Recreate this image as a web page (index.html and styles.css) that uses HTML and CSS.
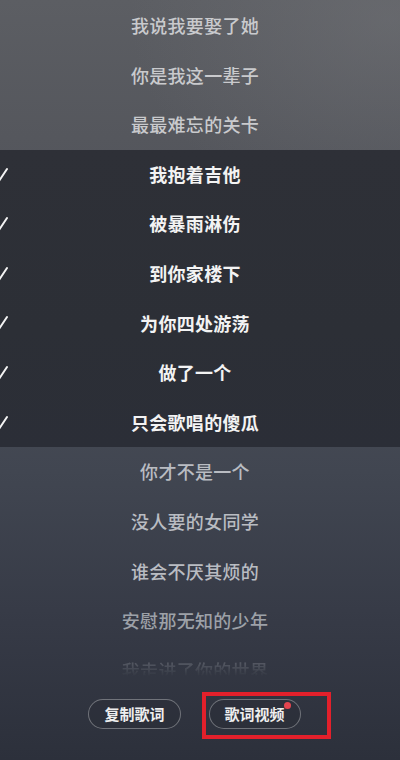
FILE: index.html
```html
<!DOCTYPE html>
<html lang="zh-CN">
<head>
<meta charset="utf-8">
<title>歌词</title>
<link rel="stylesheet" href="styles.css">
</head>
<body>
<div class="screen">
  <div class="lyrics">
    <div class="line">我说我要娶了她</div>
    <div class="line">你是我这一辈子</div>
    <div class="line">最最难忘的关卡</div>
    <div class="selected">
      <div class="line sel"><svg class="check" viewBox="0 0 14 16"><path d="M1 10 L5 14 L13 2" fill="none" stroke="#f4f4f4" stroke-width="2" stroke-linecap="round" stroke-linejoin="round"/></svg><span class="txt">我抱着吉他</span><span></span></div>
      <div class="line sel"><svg class="check" viewBox="0 0 14 16"><path d="M1 10 L5 14 L13 2" fill="none" stroke="#f4f4f4" stroke-width="2" stroke-linecap="round" stroke-linejoin="round"/></svg><span class="txt">被暴雨淋伤</span><span></span></div>
      <div class="line sel"><svg class="check" viewBox="0 0 14 16"><path d="M1 10 L5 14 L13 2" fill="none" stroke="#f4f4f4" stroke-width="2" stroke-linecap="round" stroke-linejoin="round"/></svg><span class="txt">到你家楼下</span><span></span></div>
      <div class="line sel"><svg class="check" viewBox="0 0 14 16"><path d="M1 10 L5 14 L13 2" fill="none" stroke="#f4f4f4" stroke-width="2" stroke-linecap="round" stroke-linejoin="round"/></svg><span class="txt">为你四处游荡</span><span></span></div>
      <div class="line sel"><svg class="check" viewBox="0 0 14 16"><path d="M1 10 L5 14 L13 2" fill="none" stroke="#f4f4f4" stroke-width="2" stroke-linecap="round" stroke-linejoin="round"/></svg><span class="txt">做了一个</span><span></span></div>
      <div class="line sel"><svg class="check" viewBox="0 0 14 16"><path d="M1 10 L5 14 L13 2" fill="none" stroke="#f4f4f4" stroke-width="2" stroke-linecap="round" stroke-linejoin="round"/></svg><span class="txt">只会歌唱的傻瓜</span><span></span></div>
    </div>
    <div class="line lower">你才不是一个</div>
    <div class="line lower">没人要的女同学</div>
    <div class="line lower">谁会不厌其烦的</div>
    <div class="line dim">安慰那无知的少年</div>
    <div class="line faded">我走进了你的世界</div>
  </div>
  <div class="actions">
    <button class="pill">复制歌词</button>
    <button class="pill video"><span class="label">歌词视频<span class="dot"></span></span></button>
    <div class="highlight"></div>
  </div>
</div>
</body>
</html>
```
FILE: styles.css
```css
* { box-sizing: border-box; }
html, body {
  margin: 0;
  padding: 0;
  width: 400px;
  height: 760px;
  overflow: hidden;
  background: #3c4049;
}
.screen {
  width: 400px;
  height: 760px;
  overflow: hidden;
  font-family: "Noto Sans CJK SC", "Noto Sans", sans-serif;
  background:
    radial-gradient(ellipse 260px 200px at 390px 20px, rgba(120,121,125,0.4), rgba(120,121,125,0) 100%),
    linear-gradient(180deg, #5c5e63 0%, #55575d 18%, #4a4e57 45%, #414651 62%, #363a46 82%, #2c303b 100%);
  display: flex;
  flex-direction: column;
}
.lyrics {
  padding-top: 1px;
  height: 696px;
  overflow: hidden;
}
.line {
  height: 49.6px;
  line-height: 49.6px;
  text-align: center;
  font-size: 18px;
  font-weight: 500;
  color: #c9cacd;
  letter-spacing: 0.3px;
  padding-right: 10px;
}
.selected {
  background: linear-gradient(180deg, #2e3037 0%, #2c2f36 60%, #2b2e37 100%);
}
.line.sel {
  display: grid;
  grid-template-columns: 24px 1fr 24px;
  align-items: center;
  color: #f3f3f3;
  font-weight: 700;
}
.check {
  width: 14px;
  height: 16px;
  margin-left: -6px;
  display: block;
}
.txt { text-align: center; }
.line.lower { color: #b9bcc2; }
.line.dim { color: #9da1a8; }
.line.faded {
  color: #8a8e96;
  -webkit-mask-image: linear-gradient(180deg, rgba(0,0,0,0.45) 30%, rgba(0,0,0,0) 62%);
  mask-image: linear-gradient(180deg, rgba(0,0,0,0.45) 30%, rgba(0,0,0,0) 62%);
}
.actions {
  position: relative;
  display: flex;
  justify-content: center;
  gap: 28px;
  padding-top: 3px;
  padding-right: 11px;
}
.pill {
  height: 30px;
  padding: 0 15px;
  border: 1px solid rgba(255,255,255,0.32);
  border-radius: 15px;
  background: rgba(40,43,52,0.35);
  color: #eeeeee;
  font-family: "Noto Sans CJK SC", "Noto Sans", sans-serif;
  font-size: 15px;
  font-weight: 700;
  line-height: 28px;
  white-space: nowrap;
}
.label { position: relative; display: inline-block; }
.dot {
  position: absolute;
  right: -6px;
  top: 2px;
  width: 7px;
  height: 7px;
  border-radius: 50%;
  background: #e5454f;
}
.highlight {
  position: absolute;
  left: 202px;
  top: -4px;
  width: 129px;
  height: 47px;
  border: 4px solid #e3202b;
}
```
